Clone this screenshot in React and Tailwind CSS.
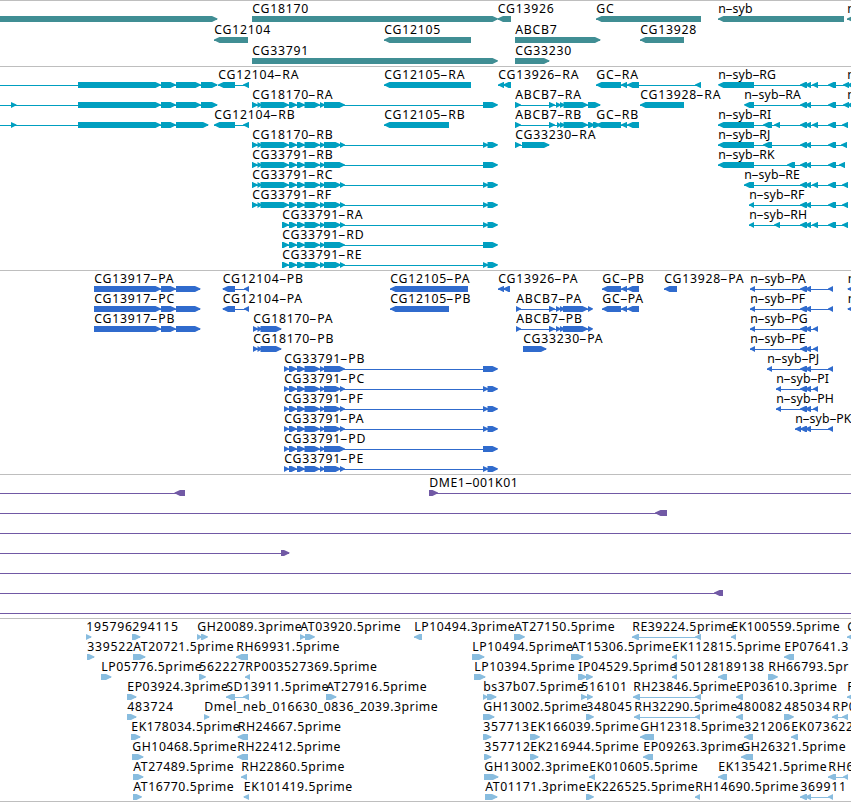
import React from "react";

// A feature is [strand, exons, label?, lineFrom?, lineTo?]; strand 1 points right, -1 left.
const TAIL_FULL = [[324, 345], [483, 498]];
const TAIL_SPLIT = [[324, 341], [340, 345], [483, 488.5], [487.5, 498]];
const HEAD = [[252, 258], [257.5, 262], [260.5, 289]];
const MID = [[289, 297], [297, 305], [304.5, 320], [320, 325]];
const long = (t, name) => [1, [...HEAD, ...MID, ...t], name];
const short = (t, name) => [1, [[282, 289], ...MID, ...t], name];
const prot = (t, name) => [1, [[284, 289], ...MID, ...t], name];
const A = [800, 807];
const B = [805, 811];
const C = [812, 818];
const D = [828, 836];
const P = [828, 833];
const CG17 = [[78, 161], [161, 176]];
const GC = [[596, 621], [621, 627], [627, 639]];
const GCP = [[602, 621], [621, 627], [627, 639]];
const ABP = [[516, 521], [549, 555], [556, 561], [560, 565], [563, 588], [588, 593]];

const genes = [
  [[1, [[-5, 217.5]]], [1, [[252, 498]], "CG18170"], [-1, [[497.5, 511]], "CG13926"], [-1, [[596, 701]], "GC"], [-1, [[718, 844]], "n-syb"], [-1, [[847, 870]], "n"]],
  [[-1, [[214, 248]], "CG12104"], [-1, [[384, 471]], "CG12105"], [1, [[515, 600.5]], "ABCB7"], [-1, [[640, 684]], "CG13928"]],
  [[1, [[252, 498]], "CG33791"], [1, [[515, 549.5]], "CG33230"]],
];

const transcripts = [
  [
    [1, [...CG17, [176, 201], [201, 217.5]], null, 0],
    [-1, [[218, 235], [243, 249]], "CG12104-RA"],
    [-1, [[384, 471]], "CG12105-RA"],
    [-1, [[498, 504], [503, 511]], "CG13926-RA"],
    [-1, [...GC, [695, 701]], "GC-RA"],
    [-1, [[718, 754], A, B, C, D, [843, 849]], "n-syb-RG", 754, 851],
    [-1, [[847, 860]], "n"],
  ],
  [
    [1, [[11, 16.5], ...CG17, [176, 201], [201, 217.5]], null, 0],
    long(TAIL_FULL, "CG18170-RA"),
    [1, [[515, 521], [549, 555], [556, 561], [560, 565], [563.5, 588], [588, 600.5]], "ABCB7-RA"],
    [-1, [[640, 684]], "CG13928-RA"],
    [-1, [[744, 754], A, B, D, [843, 849]], "n-syb-RA", 754, 851],
    [-1, [[847, 860]], "n"],
  ],
  [
    [1, [[11, 16.5], ...CG17, [176, 208.5]], null, 0],
    [-1, [[214, 235], [243, 249]], "CG12104-RB"],
    [-1, [[384, 449]], "CG12105-RB"],
    [1, [[515, 521], [549, 555], [557, 561], [560, 565], [563.5, 588], [588, 595], [593, 600.5]], "ABCB7-RB"],
    [-1, GC, "GC-RB"],
    [-1, [[718, 754], [763, 772], [774, 780], A, B, C, D, [842, 848]], "n-syb-RI"],
  ],
  [
    long(TAIL_SPLIT, "CG18170-RB"),
    [1, [[515, 521], [522, 549.5]], "CG33230-RA"],
    [-1, [[718, 754], [763, 772], A, B, D, [841, 847]], "n-syb-RJ"],
  ],
  [long(TAIL_FULL, "CG33791-RB"), [-1, [[718, 754], [787, 795], A, B, D, [839, 845]], "n-syb-RK"]],
  [long(TAIL_SPLIT, "CG33791-RC"), [-1, [[744, 754], A, B, C, D, [842, 848]], "n-syb-RE"]],
  [long(TAIL_SPLIT, "CG33791-RF"), [-1, [[749, 754], A, B, D, [842, 848]], "n-syb-RF"]],
  [short(TAIL_SPLIT, "CG33791-RA"), [-1, [[749, 754], [774, 780], A, B, C, D, [842, 848]], "n-syb-RH"]],
  [short(TAIL_FULL, "CG33791-RD")],
  [short(TAIL_SPLIT, "CG33791-RE")],
];

const cds = (name) => [1, [[94, 161], [161, 176], [176, 200.5]], name];
const proteins = [
  [
    cds("CG13917-PA"),
    [-1, [[222.5, 235], [244, 249]], "CG12104-PB"],
    [-1, [[390, 468]], "CG12105-PA"],
    [-1, [[498, 504], [503, 510]], "CG13926-PA"],
    [-1, GCP, "GC-PB"],
    [-1, [[664, 677]], "CG13928-PA"],
    [-1, [[750, 755], A, B, P], "n-syb-PA"],
    [-1, [[847.5, 860]], "n"],
  ],
  [
    cds("CG13917-PC"),
    [-1, [[222.5, 235], [244, 249]], "CG12104-PA"],
    [-1, [[390, 449]], "CG12105-PB"],
    [1, ABP, "ABCB7-PA"],
    [-1, GCP, "GC-PA"],
    [-1, [[750, 755], A, B, P], "n-syb-PF"],
    [-1, [[847.5, 860]], "n"],
  ],
  [
    cds("CG13917-PB"),
    [1, [[253, 258], [257.5, 262], [260.5, 281.5]], "CG18170-PA"],
    [1, ABP, "ABCB7-PB"],
    [-1, [[750, 755], A, B, [813, 818]], "n-syb-PG"],
  ],
  [
    [1, [[253, 258], [257.5, 262], [260.5, 281.5]], "CG18170-PB"],
    [1, [[523, 546.5]], "CG33230-PA"],
    [-1, [[750, 755], A, B, [813, 818]], "n-syb-PE"],
  ],
  [prot(TAIL_FULL, "CG33791-PB"), [-1, [[767, 772], A, B, P], "n-syb-PJ"]],
  [prot(TAIL_SPLIT, "CG33791-PC"), [-1, [[776, 781], A, B, [813, 818]], "n-syb-PI"]],
  [prot(TAIL_SPLIT, "CG33791-PF"), [-1, [[776, 781], A, B, [813, 818]], "n-syb-PH"]],
  [prot(TAIL_SPLIT, "CG33791-PA"), [-1, [[795, 801], A, B, P], "n-syb-PK"]],
  [prot(TAIL_FULL, "CG33791-PD")],
  [prot(TAIL_SPLIT, "CG33791-PE")],
];

const clones = [
  [[-1, [[174.5, 185]], null, 0], [1, [[429, 438]], "DME1-001K01", 429, 851]],
  [[-1, [[655, 667]], null, 0]],
  [[1, [], null, 0, 851]],
  [[1, [[281, 289.5]], null, 0]],
  [[1, [], null, 0, 851]],
  [[-1, [[714, 723]], null, 0]],
  [[1, [], null, 0, 851]],
];

const reads = [
  [
    [1, [[86, 91.5]], "195796"], [1, [[132, 140.5]], "294115"], [1, [[197, 202], [201, 208]], "GH20089.3prime"],
    [1, [[300, 305], [305, 315]], "AT03920.5prime"], [-1, [[414, 422]], "LP10494.3prime"], [1, [[514, 525]], "AT27150.5prime"],
    [-1, [[632, 639], [695, 701]], "RE39224.5prime"], [-1, [[731, 736]], "EK100559.5prime"], [-1, [[847, 860]], "G"],
  ],
  [
    [1, [[87, 94.5]], "339522"], [1, [[133, 145.5]], "AT20721.5prime"], [-1, [[236, 248]], "RH69931.5prime"],
    [1, [[472, 484.5]], "LP10494.5prime"], [1, [[571, 583.5]], "AT15306.5prime"], [-1, [[672, 677]], "EK112815.5prime"],
    [-1, [[784, 794]], "EP07641.3"],
  ],
  [
    [1, [[101, 111.5]], "LP05776.5prime"], [1, [[199, 206]], "562227"], [-1, [[245, 250]], "RP003527369.5prime"],
    [1, [[474, 485.5]], "LP10394.5prime"], [1, [[578, 587], [586, 593]], "IP04529.5prime"], [-1, [[672, 677]], "150128"],
    [-1, [[718, 727]], "189138"], [1, [[768, 778]], "RH66793.5pr"],
  ],
  [
    [1, [[127, 136.5]], "EP03924.3prime"], [-1, [[226, 235], [243, 249]], "SD13911.5prime"], [1, [[326, 336.5]], "AT27916.5prime"],
    [1, [[483, 488], [487, 496.5]], "bs37b07.5prime"], [1, [[581, 587], [587, 593]], "516101"],
    [-1, [[633, 640], [695, 701]], "RH23846.5prime"], [-1, [[736, 743]], "EP03610.3prime"], [-1, [[847, 860]], "F"],
  ],
  [
    [1, [[127, 136.5]], "483724"], [1, [[204, 209.5]], "Dmel_neb_016630_0836_2039.3prime"], [1, [[483, 494.5]], "GH13002.5prime"],
    [1, [[586, 594]], "348045"], [-1, [[634, 640], [695, 700]], "RH32290.5prime"], [-1, [[736, 743]], "480082"],
    [1, [[784, 794]], "485034"], [-1, [[832, 838], [842, 848]], "RP0"],
  ],
  [
    [1, [[131, 140.5]], "EK178034.5prime"], [-1, [[237.5, 248]], "RH24667.5prime"], [1, [[483, 491.5]], "357713"],
    [1, [[530, 540]], "EK166039.5prime"], [-1, [[640, 654]], "GH12318.5prime"], [-1, [[744, 753]], "321206"],
    [-1, [[791, 798]], "EK073622"],
  ],
  [
    [1, [[132, 143.5]], "GH10468.5prime"], [-1, [[237, 248]], "RH22412.5prime"], [1, [[484, 491.5]], "357712"],
    [1, [[530, 538.5]], "EK216944.5prime"], [-1, [[643, 653]], "EP09263.3prime"], [-1, [[741, 753]], "GH26321.5prime"],
  ],
  [
    [1, [[133, 143.5]], "AT27489.5prime"], [-1, [[241, 247]], "RH22860.5prime"], [1, [[484, 498.5]], "GH13002.3prime"],
    [-1, [[589, 595]], "EK010605.5prime"], [-1, [[718, 727]], "EK135421.5prime"], [-1, [[828, 836], [843, 848]], "RH6"],
  ],
  [
    [1, [[133, 142]], "AT16770.5prime"], [-1, [[243.5, 249]], "EK101419.5prime"], [1, [[485, 497.5]], "AT01171.3prime"],
    [1, [[586, 594]], "EK226525.5prime"], [-1, [[695, 700]], "RH14690.5prime"], [-1, [[800, 807], [805, 811], [828, 833]], "369911"],
  ],
];

function Exon({ strand, from, to }) {
  const h = Math.min(5.5, to - from);
  const points =
    strand > 0
      ? `${from},0 ${to - h},0 ${to},2.6 ${to},3.2 ${to - h},6 ${from},6`
      : `${to},0 ${from + h},0 ${from},2.6 ${from},3.2 ${from + h},6 ${to},6`;
  return <polygon points={points} />;
}

function spacing(text) {
  if (text.startsWith("n-")) return "tracking-[0.1px]";
  if (/prime|^DME|\.\d/.test(text)) return "tracking-[0.54px]";
  return "tracking-[0.75px]";
}

function Label({ x, text }) {
  const parts = text.split("-");
  return (
    <span className={`absolute top-0 whitespace-pre ${spacing(text)}`} style={{ left: x + 0.3 }}>
      {parts.map((p, i) => (
        <React.Fragment key={i}>
          {i > 0 && <span className="mx-[1.3px] inline-block scale-x-[1.9]">-</span>}
          {p}
        </React.Fragment>
      ))}
    </span>
  );
}

function Row({ features, height }) {
  return (
    <div className={`relative w-full pt-3.5 ${height}`}>
      <svg className="block h-1.5 w-[851px]" viewBox="0 0 851 6" fill="currentColor">
        {features.map(([strand, exons, , a, b], i) => {
          const from = a ?? exons[0][0];
          const to = b ?? exons[exons.length - 1][1] - 1;
          return (
            <g key={i}>
              <rect x={from} y="3" width={to - from} height="1" shapeRendering="crispEdges" />
              {exons.map(([s, e], j) => (
                <Exon key={j} strand={strand} from={s} to={e} />
              ))}
            </g>
          );
        })}
      </svg>
      <div className="text-black">
        {features.map((f, i) => f[2] && <Label key={i} x={f[1][0][0]} text={f[2]} />)}
      </div>
    </div>
  );
}

function Track({ rows, className, height = "h-5" }) {
  return (
    <section className={`flex flex-col border-t border-[#bebebe] pt-px ${className}`}>
      {rows.map((r, i) => (
        <Row key={i} features={r} height={height} />
      ))}
    </section>
  );
}

export default function App() {
  return (
    <main className="flex h-[802px] w-[851px] flex-col overflow-hidden border-b border-[#bebebe] bg-white font-['Noto_Sans','DejaVu_Sans',sans-serif] text-[12.25px] leading-[14px]">
      <Track rows={genes} height="h-[21px]" className="pb-px text-[#408e94]" />
      <Track rows={transcripts} className="pb-0.5 text-[#009fc0]" />
      <Track rows={proteins} className="pb-0.5 text-[#306bcd]" />
      <Track rows={clones} className="pb-0.5 text-[#7159a5]" />
      <Track rows={reads} className="text-[#89bddf]" />
    </main>
  );
}
